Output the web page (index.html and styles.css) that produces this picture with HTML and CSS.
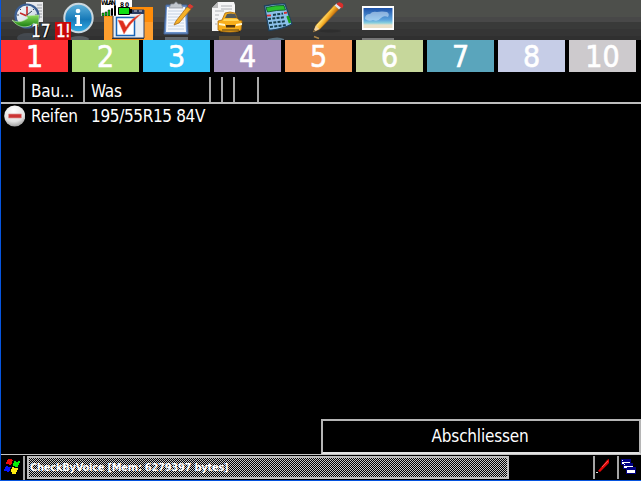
FILE: index.html
```html
<!DOCTYPE html>
<html lang="de">
<head>
<meta charset="utf-8">
<title>CheckByVoice</title>
<link rel="stylesheet" href="styles.css">
</head>
<body>
<div class="screen">
  <nav class="toolbar">
    <div class="tool">
      <svg width="50" height="40" viewBox="4 0 50 40">
        <defs>
          <linearGradient id="glass" x1="0" y1="0" x2="1" y2="1"><stop offset="0" stop-color="#fff"/><stop offset="1" stop-color="#b9cbdc"/></linearGradient>
          <linearGradient id="green" x1="0" y1="0" x2="0" y2="1"><stop offset="0" stop-color="#8ce05c"/><stop offset="1" stop-color="#177c10"/></linearGradient>
        </defs>
        <path d="M26 2h17v20H26z" fill="#e9eaec"/><path d="M37 5h5M37 8h5M38 11h4M38 14h4M37 17h5" stroke="#9a9da2"/>
        <ellipse cx="28" cy="38" rx="11" ry="5" fill="#607080" opacity=".35"/>
        <circle cx="27" cy="16" r="11.500" fill="url(#glass)" stroke="#3c5f92" stroke-width="2.200"/>
        <path d="M27 6v2M17 15h2M35 15h2M20 9l1 1M34 9l-1 1M27 24v2" stroke="#445"/><path d="M20 13l7 3V7" fill="none" stroke="#c42a2a" stroke-width="1.600"/><path d="M27 15l5-4" stroke="#345"/>
        <path d="M12 20C17 23 23 22 28 18L26 16 39 15 38 27 34 23C28 29 18 28 12 20Z" fill="url(#green)" stroke="#bce5a8" stroke-width=".6"/>
      </svg>
      <span class="count">17</span>
    </div>
    <div class="tool">
      <svg width="50" height="40" viewBox="54 0 50 40">
        <defs><linearGradient id="info" x1="0" y1="0" x2="0" y2="1"><stop offset="0" stop-color="#62b4dd"/><stop offset=".55" stop-color="#1679b8"/><stop offset="1" stop-color="#36afe6"/></linearGradient></defs>
        <ellipse cx="79" cy="39" rx="10" ry="3" fill="#7b8790" opacity=".5"/>
        <circle cx="78.500" cy="18" r="14.200" fill="url(#info)" stroke="#cbd8df" stroke-width="2"/>
        <circle cx="78" cy="11" r="2.300" fill="#fff"/><path d="M75 15h5v9h2v2h-7v-2h1.500v-7H75z" fill="#fff"/>
      </svg>
      <span class="alert">1!</span>
    </div>
    <div class="tool">
      <svg width="50" height="40" viewBox="104 0 50 40">
        <path d="M103 7h50v33h-50z" fill="#ff8c08"/><path d="M103 17h9v23h-9zM144 22h9v18h-9z" fill="#ff9f2e"/>
        <path d="M113 10h31v28h-31z" fill="#e7edf2" stroke="#304265"/><path d="M113 10h31v4h-31z" fill="#2a3b61"/><path d="M134 11h3M139 11h3" stroke="#ccd"/>
        <path d="M116.500 17.500h18v18h-18z" fill="#fff" stroke="#1765b7" stroke-width="1.500"/>
        <path d="M118 20l5 1 3 6Q131 18 141 14 130 23 124 34Q121 27 118 20Z" fill="#dd2d1c" stroke="#f07b60" stroke-width=".5"/>
        <path d="M112 38.500h32" stroke="#2b3443"/>
      </svg>
      <div class="status">
        <svg width="33" height="16" viewBox="101 0 33 16">
          <path d="M101 0h31v7h-2v9h-29z" fill="#fff"/>
          <text class="tiny" x="101" y="4.500" textLength="15">WLAN</text>
          <text class="tiny" x="120" y="6.500" textLength="9">80</text>
          <path d="M102 13h2v3h-2zM105 12h2v4h-2zM108 10h2v6h-2z" fill="#10cf18" stroke="#000" stroke-width=".5"/>
          <path d="M111.500 8.500h1v7h-1zM114.500 5.500h1v10h-1z" fill="#fff" stroke="#000"/>
          <path d="M118.500 7.500h11v7h-11z" fill="#13df16" stroke="#000"/><path d="M130 9h2v4h-2z"/>
        </svg>
      </div>
    </div>
    <div class="tool">
      <svg width="50" height="40" viewBox="154 0 50 40">
        <path d="M165 37h23v3h-23z" fill="#788089" opacity=".7"/>
        <path d="M166 5h21l1 29h-24z" fill="#6a91ca" stroke="#426295"/><path d="M167 7h18l1 25h-20z" fill="#f5f8fd"/>
        <path d="M168 11h16M168 14h16M168 17h16M168 20h16M168 23h16M168 26h16M168 29h16" stroke="#b7c6d9" stroke-width=".8"/>
        <path d="M169 8l2-4h3q2-4 4 0h3l2 4z" fill="#c2c7cd" stroke="#8b9199" stroke-width=".7"/>
        <path d="M174 25l2-4L187 7l4 2-12 14z" fill="#f5b128" stroke="#a86b17" stroke-width=".8"/><path d="M188 6l2-1.500 3 2-2 2z" fill="#d93931" stroke="#d93931"/>
      </svg>
    </div>
    <div class="tool">
      <svg width="50" height="40" viewBox="204 0 50 40">
        <path d="M218 2h16l1 3v26h-23V8z" fill="#f5f5f5"/><path d="M218 2v6h-6z" fill="#bbb"/>
        <path d="M221 6h11M221 9h11M215 11h9M215 15h4M215 19h3M215 24h2" stroke="#adb0b4"/>
        <path d="M219 36h21v4h-21z" fill="#a57c35" opacity=".4"/>
        <path d="M219 28h4v4.500h-4zM236 28h4v4.500h-4z" fill="#332810"/>
        <path d="M218 21l4-1 3-7q5-2 10 0l3 7 4 1-1 9q-3 2-11 2-9 0-12-2z" fill="#f7ae1b" stroke="#a86b0e" stroke-width=".8"/>
        <path d="M225 18l2-4q4-1 8 0l2 4z" fill="#525859"/><path d="M224 19q6-1 14 0l1 2h-16z" fill="#ffd75b"/><path d="M219 23l6 1v2l-6-1zM242 23l-6 1v2l6-1z" fill="#fff8cf"/><path d="M226 25h9v2.500h-9zM222 29.500h17v1h-17z" fill="#4f3510"/>
      </svg>
    </div>
    <div class="tool">
      <svg width="50" height="40" viewBox="254 0 50 40">
        <path d="M268 39q10-3 16 0v1h-16z" fill="#587080"/>
        <path d="M264.500 6q12-2.500 20.500-2l7 20q-9 5-23 6.500z" fill="#8cc0ea" stroke="#1e4260" stroke-width="1.300"/>
        <path d="M266 7.500q10-2.500 18-2l1.500 4.500q-9 0-18 2z" fill="#2abf2e" stroke="#085020" stroke-width=".8"/>
        <path d="M267 15.700l4-.4M284 13l3-.3" stroke="#d62e31" stroke-width="1.800"/>
        <path d="M273 15l10-1.500M268 19l17-1.800M269 23l17-1.800M270 27l16-2" stroke="#153e4c" stroke-width="2" stroke-dasharray="3 1.300"/>
        <path d="M287.500 16l2.500 7" stroke="#16a31a" stroke-width="2.400"/>
      </svg>
    </div>
    <div class="tool">
      <svg width="50" height="40" viewBox="304 0 50 40">
        <defs><linearGradient id="pencil" gradientUnits="userSpaceOnUse" x1="324" y1="14" x2="331" y2="19"><stop offset=".1" stop-color="#ffe077"/><stop offset=".5" stop-color="#f8b62e"/><stop offset="1" stop-color="#c16b0c"/></linearGradient></defs>
        <ellipse cx="330" cy="31" rx="11" ry="1.500" fill="#292929" opacity=".6"/>
        <path d="M314 36.500l5 2" stroke="#aa8447" stroke-width="1.500"/>
        <path d="M313.500 32l2.500-7L334.500 5l4.500 4-19 20z" fill="url(#pencil)" stroke="#9b6114" stroke-width=".6"/><path d="M313.500 32l2-6 4 3z" fill="#f2d3a0"/><path d="M313.500 32l1-2 1 1z" fill="#333"/>
        <path d="M334.500 5.500l2-2 4.500 4-2 2z" fill="#e0e2e7"/><path d="M336.500 4q2-3 5-1 3.500 2 .5 5.500z" fill="#d92e2b"/>
      </svg>
    </div>
    <div class="tool">
      <svg width="50" height="40" viewBox="354 0 50 40">
        <defs><linearGradient id="sky" x1="0" y1="0" x2="0" y2="1"><stop offset="0" stop-color="#1c50a8"/><stop offset=".6" stop-color="#5da5de"/><stop offset=".75" stop-color="#8ad1dd"/><stop offset=".85" stop-color="#eae0c8"/></linearGradient></defs>
        <path d="M362 6h32v24h-32z" fill="#fff"/><path d="M363.500 8h29v20h-29z" fill="url(#sky)"/>
        <path d="M365 19q0-5 5-5 2-3 7-2 5-1 10 0 3 2 1 5-4-2-7 1-3 4-8 2-4 2-8-1z" fill="#e2f3ff" opacity=".5"/>
        <path d="M362 38h32v2h-32z" fill="#777"/>
      </svg>
    </div>
  </nav>

  <div class="tabs">
    <div class="tab red">1</div><div class="tab green">2</div><div class="tab blue">3</div>
    <div class="tab purple">4</div><div class="tab orange">5</div><div class="tab lime">6</div>
    <div class="tab teal">7</div><div class="tab lavender">8</div><div class="tab grey">10</div>
  </div>

  <div class="grid-row head">
    <div></div><div>Bau...</div><div>Was</div><div></div><div></div><div></div>
  </div>
  <div class="grid-row item">
    <div class="remove">
      <svg width="24" height="24" viewBox="0 0 24 24">
        <defs><radialGradient id="ball" cx=".45" cy=".25" r=".8"><stop offset="0" stop-color="#fff"/><stop offset=".65" stop-color="#e2e2e2"/><stop offset="1" stop-color="#929292"/></radialGradient></defs>
        <circle cx="13.700" cy="12" r="10.500" fill="url(#ball)"/><path d="M7.500 10h13v4h-13z" fill="#cc3434" stroke="#d99" stroke-width=".7"/>
      </svg>
    </div>
    <div>Reifen</div><div class="size">195/55R15 84V</div>
  </div>

  <div class="actions"><button class="finish">Abschliessen</button></div>

  <footer class="taskbar">
    <div class="start">
      <svg width="22" height="24" viewBox="1 456 22 24" shape-rendering="crispEdges">
        <path d="M8 459h4v1h1l-2 5H9v-1H6l1-4h1z" fill="#f00b0b"/><path d="M14 461h2v1h2v-1h2l-1 4h-1v2h-3v-1h-2z" fill="#08ef08"/>
        <path d="M6 466h2v1h3l-2 5H7v-1H4l1-4h1z" fill="#0714ff"/><path d="M12 467h2v1h4l-1 4h-1v2h-4v-2h-1z" fill="#ffec10"/>
      </svg>
    </div>
    <div class="task">CheckByVoice [Mem: 6279397 bytes]</div>
    <div class="tray pen">
      <svg width="20" height="24" viewBox="597 456 20 24"><path d="M600 471l9-11 2-1v4l-9 9z" fill="#e10808"/><path d="M604 467l6-6" stroke="#ff7777" stroke-width=".7"/><path d="M598 472.500h2" stroke="#ddd"/></svg>
    </div>
    <div class="tray">
      <svg width="20" height="24" viewBox="620 456 20 24" shape-rendering="crispEdges">
        <path d="M622 459h10v6h-10zM624 463h10v6h-10zM627 467h10v7h-10z" fill="#000083"/>
        <path d="M623 460h1v1h-1zM623 462h2v2h-2zM625 464h1v1h-1zM625 466h3v2h-3zM624 462h7v1h-7zM626 466h8v1h-8zM628 470h8v3h-8z" fill="#fff"/>
      </svg>
    </div>
  </footer>
</div>
</body>
</html>
```
FILE: styles.css
```css
* { box-sizing: border-box; }
body { margin: 0; background: #000; }
.screen {
  width: 641px;
  height: 481px;
  overflow: hidden;
  display: flex;
  flex-direction: column;
  background: #000;
  color: #fff;
  border-left: 1px solid #0755df;
  border-bottom: 1px solid #0755df;
  font: 17px/20px "DejaVu Sans Condensed", "DejaVu Sans", sans-serif;
  font-stretch: condensed;
}
svg { display: block; }
.tiny { font: bold 6.5px "DejaVu Sans Condensed", "DejaVu Sans", sans-serif; fill: #000; }
.toolbar {
  height: 40px;
  flex: none;
  display: flex;
  padding-left: 3px;
  background: linear-gradient(#4d4f4b 0 17px, #484848 17px 22px, #393a39 22px 29px, #353535 29px 36px, #303030 36px);
}
.tool { position: relative; width: 50px; height: 40px; }
.count, .alert { position: absolute; font-size: 17px; line-height: 18px; -webkit-text-stroke: .3px #fff; }
.count { left: 27px; top: 22px; text-shadow: 1px 1px #000, -1px 0 #000; }
.alert { left: 1px; top: 22px; width: 16px; height: 18px; background: #c90808; text-align: center; letter-spacing: -1px; }
.status { position: absolute; left: -3px; top: 0; }

.tabs { height: 32px; flex: none; display: flex; gap: 4px; }
.tab { width: 67px; font-size: 30px; line-height: 34px; text-align: center; -webkit-text-stroke: .6px #fff; }
.red { background: #ff3034; }
.green { background: #addc75; }
.blue { background: #34c2f8; }
.purple { background: #a592bd; }
.orange { background: #f89e5d; }
.lime { background: #c6d79b; }
.teal { background: #5aa5bc; }
.lavender { background: #c6cde7; }
.grey { background: #cdcacd; }

.grid-row { display: grid; grid-template-columns: 24px 60px 126px 12px 12px 24px; letter-spacing: -.2px; }
.head { height: 32px; flex: none; padding-top: 5px; border-bottom: 2px solid #bdbdbd; }
.head div { border-right: 2px solid #a9a9a9; padding: 4px 0 0 6px; }
.item { height: 25px; flex: none; }
.item div { padding: 2px 0 0 6px; white-space: nowrap; }
.item .size { letter-spacing: -.35px; }
.item .remove { padding: 0; }

.actions { flex: 1; display: flex; justify-content: flex-end; align-items: flex-end; }
.finish {
  width: 320px;
  height: 35px;
  margin: 0;
  padding: 0 2px 2px 0;
  background: #000;
  color: #fff;
  border: 2px solid #b5b5b5;
  border-bottom-color: #e2e2e2;
  font: inherit;
  letter-spacing: -.2px;
}
.taskbar {
  height: 26px;
  flex: none;
  display: flex;
  border-top: 1px solid #c5c5c5;
  padding-top: 1px;
}
.start { width: 24px; border-right: 2px solid #a5a5a5; }
.task {
  width: 483px;
  height: 23px;
  margin-left: 2px;
  border: 2px solid #bdbdbd;
  background: repeating-conic-gradient(#c8c8c8 0 25%, #000 0 50%) 0 0 / 2px 2px;
  font: bold 11px/19px "DejaVu Sans Condensed", "DejaVu Sans", sans-serif;
  font-stretch: condensed;
  letter-spacing: -.25px;
  padding-left: 1px;
  white-space: nowrap;
}
.tray { width: 24px; height: 23px; border-left: 2px solid #a5a5a5; }
.pen { margin-left: 84px; }
```
